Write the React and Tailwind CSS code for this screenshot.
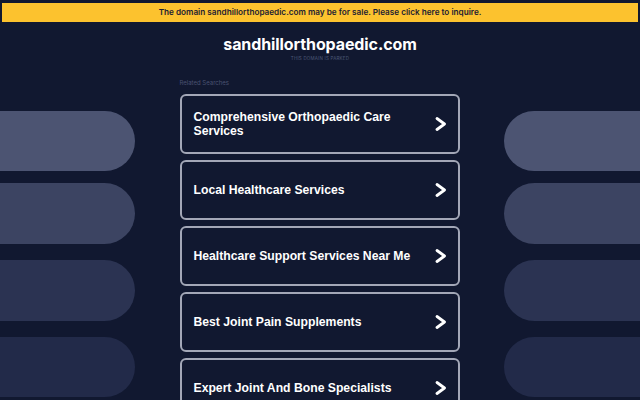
const searches = [
  "Comprehensive Orthopaedic Care Services",
  "Local Healthcare Services",
  "Healthcare Support Services Near Me",
  "Best Joint Pain Supplements",
  "Expert Joint And Bone Specialists",
];

const pills = [
  { color: "bg-[#4c5472]", cls: "h-[60px] mt-0" },
  { color: "bg-[#3c4462]", cls: "h-[61px] mt-[12px]" },
  { color: "bg-[#2b3352]", cls: "h-[61px] mt-[16px]" },
  { color: "bg-[#222a49]", cls: "h-[60px] mt-[16px]" },
];

function Pills({ side }) {
  return (
    <div className={`flex flex-col pt-[35px] ${side === "left" ? "w-[135px]" : "w-[136px]"}`}>
      {pills.map((p, i) => (
        <div
          key={i}
          className={`${p.color} ${p.cls} ${side === "left" ? "rounded-r-full" : "rounded-l-full"}`}
        />
      ))}
    </div>
  );
}

function Chevron() {
  return (
    <svg width="12" height="14" viewBox="0 0 12 14" className="shrink-0" fill="none">
      <polyline points="2,1.5 9.5,7 2,12.5" stroke="white" strokeWidth="2.8" strokeLinecap="round" strokeLinejoin="round" />
    </svg>
  );
}

export default function App() {
  return (
    <div className="w-[640px] h-[400px] overflow-hidden bg-[#111830] font-['Inter',sans-serif]">
      <div className="px-[2px] pt-[3px]">
        <div className="h-[19px] bg-[#fcc22e] flex items-center justify-center text-[8.2px] font-semibold text-[#1b2033]">
          The domain sandhillorthopaedic.com may be for sale. Please click here to inquire.
        </div>
      </div>

      <div className="h-[54px] flex flex-col items-center pt-[12px]">
        <h1 className="text-[16px] leading-[20px] font-bold text-white tracking-[-0.1px]">
          sandhillorthopaedic.com
        </h1>
        <p className="text-[4.5px] leading-[6px] mt-[2px] uppercase text-[#4d5878] tracking-[0.2px]">
          This domain is parked
        </p>
      </div>

      <div className="flex justify-between">
        <Pills side="left" />
        <div className="w-[280px]">
          <p className="h-[12px] flex items-center text-[6px] text-[#4a5270]">Related Searches</p>
          <div className="mt-[6px] flex flex-col gap-[6px]">
            {searches.map((s) => (
              <div
                key={s}
                className="h-[60px] rounded-[6px] border-2 border-[#a3a7b7] flex items-center justify-between pl-[12px] pr-[11px] font-['Liberation_Sans',Arial,sans-serif]"
              >
                <span className="text-[12.2px] leading-[14.5px] font-bold text-white pr-[20px]">{s}</span>
                <Chevron />
              </div>
            ))}
          </div>
        </div>
        <Pills side="right" />
      </div>
    </div>
  );
}
